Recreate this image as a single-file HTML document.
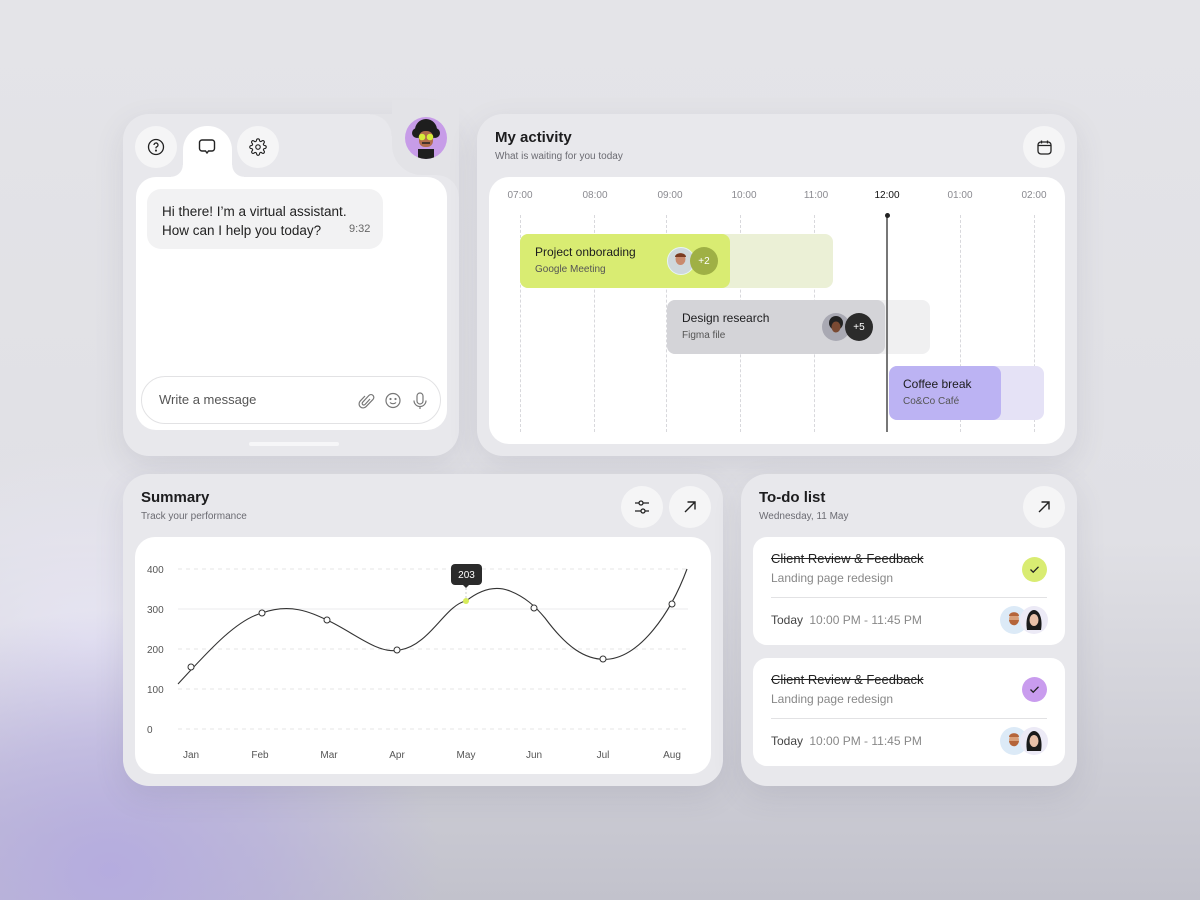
<!DOCTYPE html>
<html><head><meta charset="utf-8"><style>
*{margin:0;padding:0;box-sizing:border-box}
body{width:1200px;height:900px;overflow:hidden;font-family:"Liberation Sans",sans-serif;color:#1c1c1e;position:relative;
background:radial-gradient(ellipse 330px 260px at 110px 870px,#b5acdf 0%,rgba(181,172,223,.6) 50%,rgba(181,172,223,0) 100%),
radial-gradient(ellipse 250px 200px at 90px 640px,rgba(232,230,245,.9),rgba(232,230,245,0)),
linear-gradient(180deg,#e4e4e8 0%,#e0e0e5 60%,#c2c2cc 100%);}
.abs{position:absolute}
.panel{position:absolute;background:#e8e8ec;border-radius:26px;box-shadow:0 10px 30px rgba(80,80,110,.12)}
.white{position:absolute;background:#fff;border-radius:20px}
.cb{position:absolute;width:42px;height:42px;border-radius:50%;background:#f5f5f6;display:flex;align-items:center;justify-content:center}
.t{position:absolute;white-space:nowrap}
.h{font-size:15px;font-weight:bold}
.sub{font-size:10px;color:#6b6b72}
.tl{font-size:10px;color:#8a8a90;transform:translateX(-50%)}
.dash{position:absolute;top:215px;height:217px;border-left:1px dashed #d8d8dc}
.bar{position:absolute;border-radius:8px}
.bt{font-size:12px;color:#1c1c1e}
.bs{font-size:10px;color:#555}
.av{position:absolute;width:28px;height:28px;border-radius:50%}
</style></head><body>

<!-- Chat panel -->
<div class="panel" style="left:123px;top:114px;width:336px;height:342px"></div>
<div class="abs" style="left:392px;top:100px;width:67px;height:75px;background:#e3e3e7;border-bottom-left-radius:30px"></div>
<div class="abs" style="left:370px;top:114px;width:22px;height:22px;background:radial-gradient(circle at 0 22px,#e8e8ec 21px,#e3e3e7 22px)"></div>
<div class="abs" style="left:437px;top:175px;width:22px;height:22px;background:radial-gradient(circle at 0 22px,#e8e8ec 21.5px,#e3e3e7 22px)"></div>
<div class="white" style="left:136px;top:177px;width:311px;height:253px"></div>
<div class="abs" style="left:183px;top:126px;width:49px;height:60px;background:#fff;border-radius:24px 24px 0 0"></div>
<div class="abs" style="left:171px;top:165px;width:12px;height:12px;background:radial-gradient(circle at 0 0,#e8e8ec 11.5px,#fff 12px)"></div>
<div class="abs" style="left:232px;top:165px;width:12px;height:12px;background:radial-gradient(circle at 12px 0,#e8e8ec 11.5px,#fff 12px)"></div>
<div class="cb" style="left:135px;top:126px"><svg width="18" height="18" viewBox="0 0 18 18" fill="none" stroke="#222" stroke-width="1.3"><circle cx="9" cy="9" r="7.5"/><path d="M7 7a2 2 0 1 1 2.5 1.9c-.4.2-.5.5-.5.9v.6"/><circle cx="9" cy="12.6" r=".4" fill="#222"/></svg></div>
<div class="abs" style="left:198px;top:138px"><svg width="18" height="18" viewBox="0 0 18 18" fill="none" stroke="#222" stroke-width="1.4"><path d="M4 2h10a2.5 2.5 0 0 1 2.5 2.5v6A2.5 2.5 0 0 1 14 13h-3.5L9 15l-1.5-2H4A2.5 2.5 0 0 1 1.5 10.5v-6A2.5 2.5 0 0 1 4 2z"/></svg></div>
<div class="cb" style="left:237px;top:126px"><svg width="18" height="18" viewBox="0 0 24 24" fill="none" stroke="#222" stroke-width="1.5"><circle cx="12" cy="12" r="3"/><path d="M19.4 15a1.7 1.7 0 0 0 .3 1.8l.1.1a2 2 0 1 1-2.8 2.8l-.1-.1a1.7 1.7 0 0 0-1.8-.3 1.7 1.7 0 0 0-1 1.5V21a2 2 0 1 1-4 0v-.1a1.7 1.7 0 0 0-1.1-1.5 1.7 1.7 0 0 0-1.8.3l-.1.1a2 2 0 1 1-2.8-2.8l.1-.1a1.7 1.7 0 0 0 .3-1.8 1.7 1.7 0 0 0-1.5-1H3a2 2 0 1 1 0-4h.1a1.7 1.7 0 0 0 1.5-1.1 1.7 1.7 0 0 0-.3-1.8l-.1-.1a2 2 0 1 1 2.8-2.8l.1.1a1.7 1.7 0 0 0 1.8.3H9a1.7 1.7 0 0 0 1-1.5V3a2 2 0 1 1 4 0v.1a1.7 1.7 0 0 0 1 1.5 1.7 1.7 0 0 0 1.8-.3l.1-.1a2 2 0 1 1 2.8 2.8l-.1.1a1.7 1.7 0 0 0-.3 1.8V9a1.7 1.7 0 0 0 1.5 1H21a2 2 0 1 1 0 4h-.1a1.7 1.7 0 0 0-1.5 1z"/></svg></div>
<div class="abs" style="left:405px;top:117px;width:42px;height:42px;border-radius:50%;background:#c79ce8;overflow:hidden">
<svg width="42" height="42" viewBox="0 0 42 42"><circle cx="21" cy="13" r="11" fill="#1e1e1e"/><circle cx="12" cy="16" r="5" fill="#1e1e1e"/><circle cx="30" cy="16" r="5" fill="#1e1e1e"/><rect x="14" y="14" width="14" height="16" rx="6" fill="#b06d4d"/><circle cx="17" cy="20" r="3.3" fill="#d6ec3a"/><circle cx="25" cy="20" r="3.3" fill="#d6ec3a"/><path d="M17 26h8" stroke="#222" stroke-width="1.5"/><rect x="13" y="32" width="16" height="10" fill="#1e1e1e"/></svg></div>
<div class="abs" style="left:147px;top:189px;width:236px;height:60px;background:#f2f2f3;border-radius:14px"></div>
<div class="t" style="left:162px;top:202px;font-size:13.5px;line-height:19px;color:#222">Hi there! I’m a virtual assistant.<br>How can I help you today?</div>
<div class="t" style="left:349px;top:223px;font-size:11px;color:#666">9:32</div>
<div class="abs" style="left:141px;top:376px;width:300px;height:48px;border:1px solid #e2e2e4;border-radius:24px;background:#fff"></div>
<div class="t" style="left:159px;top:392px;font-size:13px;color:#555">Write a message</div>
<svg class="abs" style="left:358px;top:392px" width="70" height="18" viewBox="0 0 70 18" fill="none" stroke="#777" stroke-width="1.2"><path d="M12 7l-5 5.5a1.6 1.6 0 0 1-2.4-2.2L11 3.4a2.8 2.8 0 0 1 4 4l-7 7.3a4 4 0 0 1-5.8-5.6L7 4"/><circle cx="35" cy="8.5" r="7"/><circle cx="32.5" cy="7" r=".5" fill="#777"/><circle cx="37.5" cy="7" r=".5" fill="#777"/><path d="M32 10.5c1.5 1.6 4.5 1.6 6 0"/><rect x="59" y="1" width="6" height="11" rx="3"/><path d="M56 8.5a6 6 0 0 0 12 0M62 14.5V17"/></svg>
<div class="abs" style="left:249px;top:442px;width:90px;height:4px;border-radius:2px;background:#f6f6f8"></div>

<!-- Activity -->
<div class="panel" style="left:477px;top:114px;width:600px;height:342px"></div>
<div class="t h" style="left:495px;top:129px">My activity</div>
<div class="t sub" style="left:495px;top:151px">What is waiting for you today</div>
<div class="cb" style="left:1023px;top:126px"><svg width="17" height="17" viewBox="0 0 17 17" fill="none" stroke="#222" stroke-width="1.3"><rect x="2" y="3" width="13" height="12" rx="3"/><path d="M2 6.5h13M5.5 1.5v3M11.5 1.5v3"/></svg></div>
<div class="white" style="left:489px;top:177px;width:576px;height:267px"></div>
<div class="t tl" style="left:520px;top:190px">07:00</div>
<div class="t tl" style="left:595px;top:190px">08:00</div>
<div class="t tl" style="left:670px;top:190px">09:00</div>
<div class="t tl" style="left:744px;top:190px">10:00</div>
<div class="t tl" style="left:816px;top:190px">11:00</div>
<div class="t tl" style="left:887px;top:190px;color:#111">12:00</div>
<div class="t tl" style="left:960px;top:190px">01:00</div>
<div class="t tl" style="left:1034px;top:190px">02:00</div>
<div class="dash" style="left:520px"></div><div class="dash" style="left:594px"></div><div class="dash" style="left:666px"></div><div class="dash" style="left:740px"></div><div class="dash" style="left:814px"></div><div class="dash" style="left:960px"></div><div class="dash" style="left:1034px"></div>
<div class="bar" style="left:520px;top:234px;width:313px;height:54px;background:#ebf0d6"></div>
<div class="bar" style="left:520px;top:234px;width:210px;height:54px;background:#d9ec72"></div>
<div class="t bt" style="left:535px;top:245px">Project onborading</div>
<div class="t bs" style="left:535px;top:264px">Google Meeting</div>
<div class="av" style="left:667px;top:247px;background:#cfd8dc;border:1.5px solid #e6f4f5"><svg width="25" height="25" viewBox="0 0 25 25"><ellipse cx="12.5" cy="11" rx="5" ry="6" fill="#c98a6e"/><path d="M7 9c0-5 11-5 11 0" fill="#7a3b22"/></svg></div>
<div class="av" style="left:690px;top:247px;background:#9fb045;color:#fff;font-size:10px;display:flex;align-items:center;justify-content:center">+2</div>
<div class="bar" style="left:667px;top:300px;width:263px;height:54px;background:#f0f0f1"></div>
<div class="bar" style="left:667px;top:300px;width:218px;height:54px;background:#d4d4d8"></div>
<div class="t bt" style="left:682px;top:311px">Design research</div>
<div class="t bs" style="left:682px;top:330px">Figma file</div>
<div class="av" style="left:822px;top:313px;background:#a9a9b3"><svg width="28" height="28" viewBox="0 0 28 28"><circle cx="14" cy="10" r="7" fill="#222"/><ellipse cx="14" cy="14" rx="4.5" ry="5.5" fill="#7a4a33"/></svg></div>
<div class="av" style="left:845px;top:313px;background:#2b2b2b;color:#fff;font-size:10px;display:flex;align-items:center;justify-content:center">+5</div>
<div class="bar" style="left:889px;top:366px;width:155px;height:54px;background:#e5e2f6"></div>
<div class="bar" style="left:889px;top:366px;width:112px;height:54px;background:#bcb3f3"></div>
<div class="t bt" style="left:903px;top:377px">Coffee break</div>
<div class="t bs" style="left:903px;top:396px">Co&amp;Co Café</div>
<div class="abs" style="left:886px;top:216px;width:2px;height:216px;background:#777"></div>
<div class="abs" style="left:885px;top:213px;width:5px;height:5px;border-radius:50%;background:#222"></div>

<!-- Summary -->
<div class="panel" style="left:123px;top:474px;width:600px;height:312px"></div>
<div class="t h" style="left:141px;top:489px">Summary</div>
<div class="t sub" style="left:141px;top:511px">Track your performance</div>
<div class="cb" style="left:621px;top:486px"><svg width="18" height="18" viewBox="0 0 18 18" fill="none" stroke="#222" stroke-width="1.3"><path d="M2 5h4M10 5h6M2 13h6M12 13h4"/><circle cx="8" cy="5" r="2"/><circle cx="10" cy="13" r="2"/></svg></div>
<div class="cb" style="left:669px;top:486px"><svg width="14" height="14" viewBox="0 0 14 14" fill="none" stroke="#222" stroke-width="1.4"><path d="M2 12L12 2M4.5 2H12v7.5"/></svg></div>
<div class="white" style="left:135px;top:537px;width:576px;height:237px"></div>
<svg class="abs" style="left:135px;top:537px" width="576" height="237" viewBox="135 537 576 237" font-family="Liberation Sans, sans-serif">
<g stroke="#e4e4e6" stroke-dasharray="4 4"><path d="M178 569H688M178 649H688M178 689H688M178 729H688"/></g>
<path d="M178 609H688" stroke="#ebebed"/>
<g font-size="10" fill="#555"><text x="147" y="573">400</text><text x="147" y="613">300</text><text x="147" y="653">200</text><text x="147" y="693">100</text><text x="147" y="733">0</text></g>
<g font-size="10" fill="#555" text-anchor="middle"><text x="191" y="758">Jan</text><text x="260" y="758">Feb</text><text x="329" y="758">Mar</text><text x="397" y="758">Apr</text><text x="466" y="758">May</text><text x="534" y="758">Jun</text><text x="603" y="758">Jul</text><text x="672" y="758">Aug</text></g>
<path d="M178 684C205 655 235 620 262 613C290 603 310 612 327 620C355 633 378 655 400 650C430 645 445 605 466 601C480 590 495 585 510 591C525 597 535 606 545 618C565 645 585 662 610 659C640 655 670 615 687 569" fill="none" stroke="#333" stroke-width="1.1"/>
<g fill="#fff" stroke="#333" stroke-width="1"><circle cx="191" cy="667" r="3"/><circle cx="262" cy="613" r="3"/><circle cx="327" cy="620" r="3"/><circle cx="397" cy="650" r="3"/><circle cx="534" cy="608" r="3"/><circle cx="603" cy="659" r="3"/><circle cx="672" cy="604" r="3"/></g>
<path d="M466 584V600" stroke="#ccc" stroke-dasharray="2 2"/>
<circle cx="466" cy="601" r="3" fill="#d6ec5a"/>
<rect x="451" y="564" width="31" height="21" rx="4" fill="#2b2b2b"/><path d="M463 585l3 3 3-3z" fill="#2b2b2b"/>
<text x="466.5" y="578" font-size="10" fill="#fff" text-anchor="middle">203</text>
</svg>

<!-- To-do -->
<div class="panel" style="left:741px;top:474px;width:336px;height:312px"></div>
<div class="t h" style="left:759px;top:489px">To-do list</div>
<div class="t sub" style="left:759px;top:511px">Wednesday, 11 May</div>
<div class="cb" style="left:1023px;top:486px"><svg width="14" height="14" viewBox="0 0 14 14" fill="none" stroke="#222" stroke-width="1.4"><path d="M2 12L12 2M4.5 2H12v7.5"/></svg></div>

<div class="white" style="left:753px;top:537px;width:312px;height:108px;border-radius:14px"></div>
<div class="t" style="left:771px;top:551px;font-size:13px;text-decoration:line-through;color:#222">Client Review &amp; Feedback</div>
<div class="t" style="left:771px;top:571px;font-size:12px;color:#888">Landing page redesign</div>
<div class="abs" style="left:1022px;top:557px;width:25px;height:25px;border-radius:50%;background:#d9ec72"><svg width="25" height="25" viewBox="0 0 25 25" fill="none" stroke="#222" stroke-width="1.3"><path d="M8.5 12.5l2.7 2.7 5.3-5.4"/></svg></div>
<div class="abs" style="left:771px;top:597px;width:276px;height:1px;background:#e2e2e4"></div>
<div class="t" style="left:771px;top:613px;font-size:12px;color:#444">Today <span style="color:#888;margin-left:3px">10:00 PM - 11:45 PM</span></div>
<div class="av" style="left:1000px;top:606px;background:#dceaf7"><svg width="28" height="28" viewBox="0 0 28 28"><ellipse cx="14" cy="13" rx="5" ry="6" fill="#d9a07a"/><path d="M9 14c1 7 9 7 10 0" fill="#b5653a"/><path d="M9 10c0-5 10-5 10 0" fill="#b5653a"/></svg></div>
<div class="av" style="left:1020px;top:606px;background:#eceaf6"><svg width="28" height="28" viewBox="0 0 28 28"><path d="M7 24c-2-12 2-20 7-20s9 8 7 20z" fill="#1a1a1a"/><ellipse cx="14" cy="14" rx="4.5" ry="6" fill="#e8c0a8"/></svg></div>

<div class="white" style="left:753px;top:658px;width:312px;height:108px;border-radius:14px"></div>
<div class="t" style="left:771px;top:672px;font-size:13px;text-decoration:line-through;color:#222">Client Review &amp; Feedback</div>
<div class="t" style="left:771px;top:692px;font-size:12px;color:#888">Landing page redesign</div>
<div class="abs" style="left:1022px;top:677px;width:25px;height:25px;border-radius:50%;background:#c99cee"><svg width="25" height="25" viewBox="0 0 25 25" fill="none" stroke="#222" stroke-width="1.3"><path d="M8.5 12.5l2.7 2.7 5.3-5.4"/></svg></div>
<div class="abs" style="left:771px;top:718px;width:276px;height:1px;background:#e2e2e4"></div>
<div class="t" style="left:771px;top:734px;font-size:12px;color:#444">Today <span style="color:#888;margin-left:3px">10:00 PM - 11:45 PM</span></div>
<div class="av" style="left:1000px;top:727px;background:#dceaf7"><svg width="28" height="28" viewBox="0 0 28 28"><ellipse cx="14" cy="13" rx="5" ry="6" fill="#d9a07a"/><path d="M9 14c1 7 9 7 10 0" fill="#b5653a"/><path d="M9 10c0-5 10-5 10 0" fill="#b5653a"/></svg></div>
<div class="av" style="left:1020px;top:727px;background:#eceaf6"><svg width="28" height="28" viewBox="0 0 28 28"><path d="M7 24c-2-12 2-20 7-20s9 8 7 20z" fill="#1a1a1a"/><ellipse cx="14" cy="14" rx="4.5" ry="6" fill="#e8c0a8"/></svg></div>
</body></html>
